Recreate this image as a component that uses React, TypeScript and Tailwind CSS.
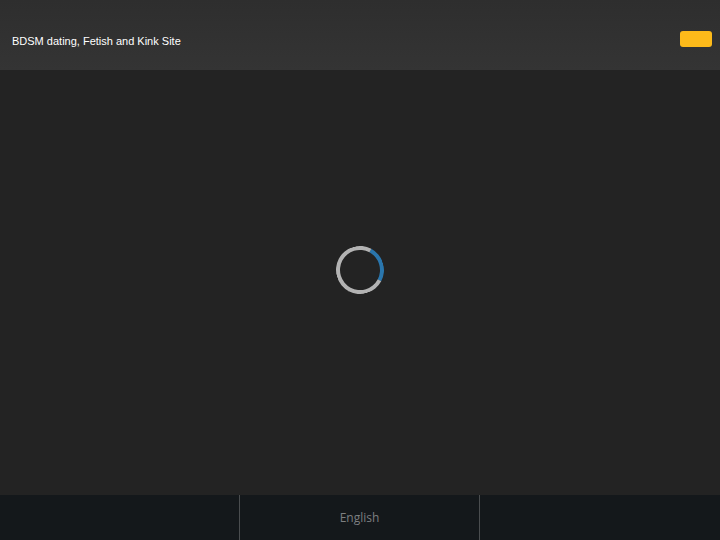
export default function App() {
  return (
    <div className="flex h-[540px] w-[720px] flex-col overflow-hidden bg-[#232323]">
      <header className="flex h-[70px] shrink-0 items-center justify-between bg-gradient-to-b from-[#2e2e2e] to-[#343434] pl-3 pr-2">
        <h1 className="mt-[11px] font-['Liberation_Sans',Arial,sans-serif] text-[11px] font-normal leading-[14px] text-white">
          BDSM dating, Fetish and Kink Site
        </h1>
        <button className="mt-[8px] h-4 w-8 rounded-[3px] bg-[#fdba1a]" />
      </header>

      <main className="flex flex-1 items-center justify-center pb-[25px]">
        <div className="h-12 w-12 rotate-[73deg] rounded-full border-4 border-[#b3b3b3] border-t-[#2a76ad]" />
      </main>

      <footer className="grid h-[45px] shrink-0 grid-cols-[239px_241px_240px] bg-[#14181b]">
        <div />
        <div className="flex items-center justify-center border-x border-[#4a4d4f] pt-[1px] font-['Open_Sans',sans-serif] text-[12px] text-[#7d7f81]">
          English
        </div>
        <div />
      </footer>
    </div>
  );
}
